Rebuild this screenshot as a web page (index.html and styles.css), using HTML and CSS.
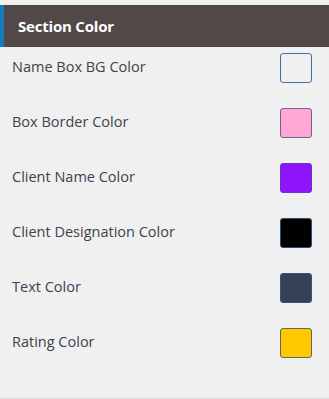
FILE: index.html
```html
<!DOCTYPE html>
<html>
<head>
<meta charset="utf-8">
<link rel="stylesheet" href="styles.css">
</head>
<body>
<div class="panel">
  <div class="header">Section Color</div>
  <div class="list">
    <div class="row"><span class="label">Name Box BG Color</span><span class="swatch sw-bg"></span></div>
    <div class="row"><span class="label">Box Border Color</span><span class="swatch sw-border"></span></div>
    <div class="row"><span class="label">Client Name Color</span><span class="swatch sw-name"></span></div>
    <div class="row"><span class="label">Client Designation Color</span><span class="swatch sw-desig"></span></div>
    <div class="row"><span class="label">Text Color</span><span class="swatch sw-text"></span></div>
    <div class="row"><span class="label">Rating Color</span><span class="swatch sw-rating"></span></div>
  </div>
</div>
</body>
</html>
```

FILE: styles.css
```css
html, body {
  margin: 0;
  padding: 0;
  background: #f0f0f1;
}
body {
  font-family: "Open Sans", "Noto Sans", sans-serif;
  color: #50575e;
}
.panel {
  padding-top: 5px;
  height: 394px;
  display: flex;
  flex-direction: column;
}
.header {
  height: 42px;
  box-sizing: border-box;
  background: #504947;
  border-left: 4px solid #1479bd;
  color: #ffffff;
  font-weight: 700;
  font-size: 15px;
  letter-spacing: -0.2px;
  display: flex;
  align-items: center;
  padding-left: 14px;
}
.list {
  flex: 1;
  display: flex;
  flex-direction: column;
  gap: 25px;
  padding: 6px 17px 0 12px;
  border-bottom: 1px solid #dcdcde;
}
.row {
  height: 30px;
  display: flex;
  align-items: center;
  justify-content: space-between;
}
.label {
  font-size: 14.5px;
  line-height: 20px;
  margin-bottom: 3px;
  font-weight: 400;
  letter-spacing: 0;
  color: #3c434a;
}
.swatch {
  width: 32px;
  height: 30px;
  box-sizing: border-box;
  border: 1px solid #4f6f93;
  border-radius: 3px;
}
.sw-bg { background: #f0f0f1; border-color: #3d72a6; }
.sw-border { background: #ffa8d5; border-color: #7a5f8f; }
.sw-name { background: #8d14fb; border-color: #6a30d0; }
.sw-desig { background: #000000; border-color: #2b4f73; }
.sw-text { background: #364156; border-color: #30577f; }
.sw-rating { background: #ffc800; border-color: #5b6a68; }
```
